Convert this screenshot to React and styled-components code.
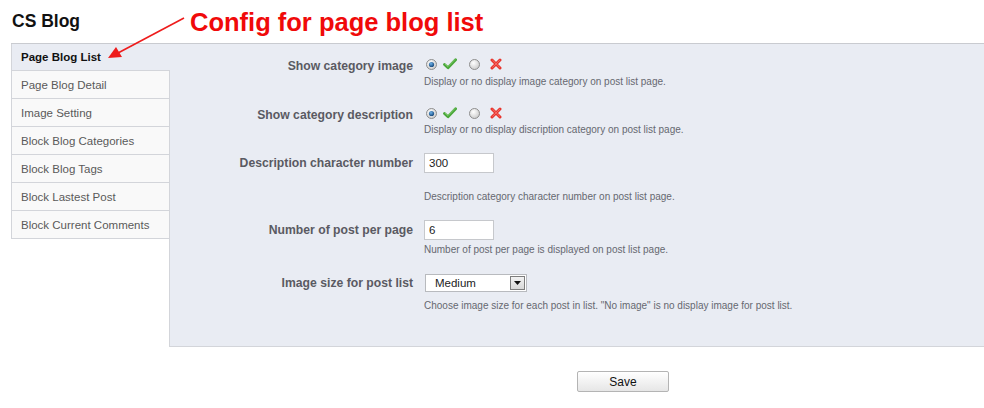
import React from "react";
import styled, { createGlobalStyle } from "styled-components";

const GlobalStyle = createGlobalStyle`
  html, body {
    margin: 0;
    padding: 0;
    background: #ffffff;
    font-family: "Liberation Sans", Arial, sans-serif;
  }
`;

const tabs = [
  "Page Blog List",
  "Page Blog Detail",
  "Image Setting",
  "Block Blog Categories",
  "Block Blog Tags",
  "Block Lastest Post",
  "Block Current Comments",
];

export default function App() {
  return (
    <Page>
      <GlobalStyle />
      <Header>
        <Title>CS Blog</Title>
        <Note>Config for page blog list</Note>
        <Arrow width="200" height="70" viewBox="0 0 200 70">
          <line x1="184" y1="18" x2="118" y2="53" stroke="#ee1c1c" strokeWidth="1.6" />
          <polygon points="108,58 116,47 122,57" fill="#ee1c1c" />
        </Arrow>
      </Header>

      <Layout>
        <TabList>
          {tabs.map((t, i) => (
            <Tab key={t} $active={i === 0}>
              {t}
            </Tab>
          ))}
        </TabList>

        <Panel>
          <Row>
            <Label>Show category image</Label>
            <Field>
              <Controls>
                <Radio checked />
                <CheckIcon />
                <Radio />
                <CrossIcon />
              </Controls>
              <Hint $top={-1}>Display or no display image category on post list page.</Hint>
            </Field>
          </Row>

          <Row>
            <Label>Show category description</Label>
            <Field>
              <Controls>
                <Radio checked />
                <CheckIcon />
                <Radio />
                <CrossIcon />
              </Controls>
              <Hint $top={-2}>Display or no display discription category on post list page.</Hint>
            </Field>
          </Row>

          <Row>
            <Label>Description character number</Label>
            <Field>
              <Controls>
                <TextBox>300</TextBox>
              </Controls>
              <Hint $top={17}>Description category character number on post list page.</Hint>
            </Field>
          </Row>

          <Row>
            <Label>Number of post per page</Label>
            <Field>
              <Controls>
                <TextBox>6</TextBox>
              </Controls>
              <Hint $top={3}>Number of post per page is displayed on post list page.</Hint>
            </Field>
          </Row>

          <Row>
            <Label>Image size for post list</Label>
            <Field>
              <Controls>
                <SelectBox>
                  <span>Medium</span>
                  <SelectButton>
                    <svg width="7" height="4" viewBox="0 0 7 4">
                      <polygon points="0,0 7,0 3.5,4" fill="#111" />
                    </svg>
                  </SelectButton>
                </SelectBox>
              </Controls>
              <Hint $top={6}>
                Choose image size for each post in list. "No image" is no display image for post list.
              </Hint>
            </Field>
          </Row>
        </Panel>
      </Layout>

      <Footer>
        <SaveButton>Save</SaveButton>
      </Footer>
    </Page>
  );
}

function Radio({ checked }) {
  return (
    <RadioWrap width="11" height="11" viewBox="0 0 11 11" $first={checked}>
      <defs>
        <radialGradient id={checked ? "rOn" : "rOff"} cx="0.4" cy="0.35" r="0.7">
          <stop offset="0" stopColor="#ffffff" />
          <stop offset="1" stopColor="#c9c9c9" />
        </radialGradient>
        <radialGradient id="dot" cx="0.4" cy="0.35" r="0.7">
          <stop offset="0" stopColor="#6fb3ea" />
          <stop offset="1" stopColor="#0e3f73" />
        </radialGradient>
      </defs>
      <circle cx="5.5" cy="5.5" r="5" fill={`url(#${checked ? "rOn" : "rOff"})`} stroke="#8e8e8e" strokeWidth="1" />
      {checked && <circle cx="5.5" cy="5.5" r="2.6" fill="url(#dot)" />}
    </RadioWrap>
  );
}

function CheckIcon() {
  return (
    <IconWrap width="14" height="12" viewBox="0 0 14 12" $gap={6}>
      <path
        d="M1.5 6.5 L5 9.8 L12.6 1.8"
        fill="none"
        stroke="#4aa73a"
        strokeWidth="2.8"
        strokeLinecap="round"
        strokeLinejoin="round"
      />
      <path d="M2.3 6.2 L5 8.6 L11.8 1.6" fill="none" stroke="#8fd67a" strokeWidth="0.8" strokeLinecap="round" />
    </IconWrap>
  );
}

function CrossIcon() {
  return (
    <IconWrap width="12" height="12" viewBox="0 0 12 12" $gap={10}>
      <path d="M2 2 L10 10 M10 2 L2 10" stroke="#e8342c" strokeWidth="3" strokeLinecap="round" />
      <path d="M2.6 2.3 L9.6 9.3 M9.6 2.3 L2.6 9.3" stroke="#fb8a84" strokeWidth="0.7" strokeLinecap="round" />
    </IconWrap>
  );
}

const Page = styled.div`
  width: 984px;
  height: 408px;
  overflow: hidden;
`;

const Header = styled.div`
  position: relative;
  height: 43px;
`;

const Title = styled.h1`
  margin: 0;
  padding: 10px 0 0 12px;
  font-size: 17.5px;
  line-height: 22px;
  font-weight: bold;
  color: #111;
`;

const Note = styled.div`
  position: absolute;
  left: 190px;
  top: 7px;
  font-size: 25.5px;
  line-height: 30px;
  font-weight: bold;
  color: #f00a0a;
  white-space: nowrap;
`;

const Arrow = styled.svg`
  position: absolute;
  left: 0;
  top: 0;
  z-index: 5;
  overflow: visible;
  pointer-events: none;
`;

const Layout = styled.div`
  display: flex;
  margin-left: 11px;
  border-top: 1px solid #c9cbd0;
  box-shadow: inset 0 1px 0 #e2e4ea;
`;

const TabList = styled.div`
  width: 158px;
  flex-shrink: 0;
  align-self: flex-start;
`;

const Tab = styled.div`
  box-sizing: border-box;
  position: relative;
  z-index: ${(p) => (p.$active ? 1 : 0)};
  height: ${(p) => (p.$active ? 27 : 28)}px;
  width: ${(p) => (p.$active ? 159 : 158)}px;
  margin-right: ${(p) => (p.$active ? -1 : 0)}px;
  padding: 1px 0 0 9px;
  border-left: 1px solid #d3d5da;
  border-bottom: 1px solid #d3d5da;
  background: ${(p) => (p.$active ? "#e9ecf3" : "#f9f9f9")};
  color: ${(p) => (p.$active ? "#111" : "#5a5a5a")};
  font-size: 11.5px;
  font-weight: ${(p) => (p.$active ? "bold" : "normal")};
  line-height: ${(p) => (p.$active ? 25 : 26)}px;
  white-space: nowrap;
`;

const Panel = styled.div`
  flex: 1;
  background: #e9ecf3;
  border-left: 1px solid #d3d5da;
  border-bottom: 1px solid #d3d5da;
  padding: 12px 0 33px;
`;

const Row = styled.div`
  display: grid;
  grid-template-columns: 243px 1fr;
  column-gap: 11px;
  margin-bottom: 16px;
  &:last-child {
    margin-bottom: 0;
  }
`;

const Label = styled.div`
  text-align: right;
  font-size: 12.2px;
  font-weight: bold;
  line-height: 20px;
  color: #5a5a62;
  white-space: nowrap;
`;

const Field = styled.div`
  display: flex;
  flex-direction: column;
`;

const Controls = styled.div`
  display: flex;
  align-items: center;
  height: 20px;
`;

const RadioWrap = styled.svg`
  display: block;
  margin-left: ${(p) => (p.$first ? 2 : 12)}px;
  margin-top: -3px;
`;

const IconWrap = styled.svg`
  display: block;
  margin-left: ${(p) => p.$gap}px;
  margin-top: -4px;
`;

const Hint = styled.div`
  margin-top: ${(p) => p.$top}px;
  font-size: 10px;
  line-height: 14px;
  color: #666870;
  white-space: nowrap;
`;

const TextBox = styled.div`
  box-sizing: border-box;
  width: 70px;
  height: 20px;
  padding-left: 4px;
  background: #fff;
  border: 1px solid #c6c8cc;
  font-size: 11.5px;
  line-height: 18px;
  color: #222;
`;

const SelectBox = styled.div`
  box-sizing: border-box;
  display: flex;
  align-items: center;
  justify-content: space-between;
  width: 102px;
  height: 18px;
  margin-left: 1px;
  padding: 0 1px 0 9px;
  background: #fff;
  border: 1px solid #b8babe;
  font-size: 11.5px;
  color: #222;
`;

const SelectButton = styled.div`
  box-sizing: border-box;
  display: flex;
  align-items: center;
  justify-content: center;
  width: 15px;
  height: 14px;
  border: 1px solid #7d7d7d;
  background: linear-gradient(#f2f2f2, #d8d8d8);
`;

const Footer = styled.div`
  padding: 24px 0 0 577px;
`;

const SaveButton = styled.button`
  display: block;
  width: 92px;
  height: 21px;
  padding: 0;
  border: 1px solid #b4b4b4;
  border-radius: 2px;
  background: linear-gradient(#ffffff, #e6e6e6);
  font-family: "Liberation Sans", Arial, sans-serif;
  font-size: 12px;
  color: #111;
`;
